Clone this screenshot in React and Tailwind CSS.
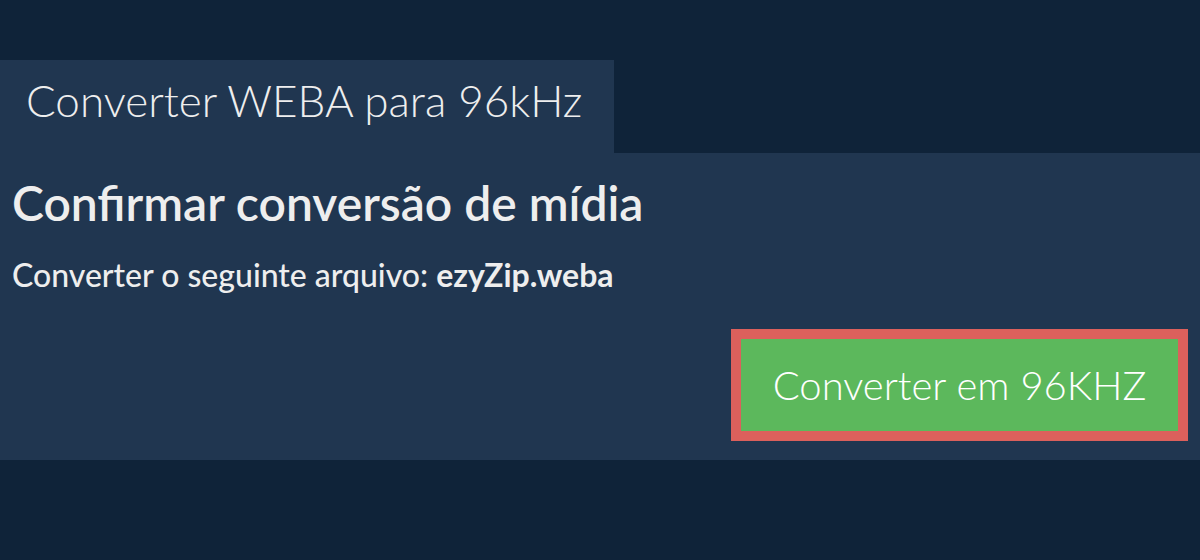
export default function App() {
  return (
    <div className="min-h-[560px] w-[1200px] bg-[#0f2339] pt-[60px] text-[#eeeeee] font-['Lato','Noto_Sans',sans-serif]">
      {/* aba do título */}
      <div className="h-[93px] w-[614px] bg-[#203650] pl-[26px] pt-[18px]">
        <h1 className="text-[44px] font-light leading-none">
          Converter WEBA para 96kHz
        </h1>
      </div>

      {/* painel de confirmação */}
      <div className="flex h-[307px] flex-col bg-[#203650] px-[12px]">
        <h2 className="mt-[26px] text-[48px] font-semibold leading-none">
          Confirmar conversão de mídia
        </h2>
        <p className="mt-[32px] text-[32px] font-medium leading-none">
          Converter o seguinte arquivo: <b className="font-bold">ezyZip.weba</b>
        </p>
        <div className="mt-[38px] flex justify-end">
          <button className="h-[112px] w-[457px] border-[10px] border-[#dc605c] bg-[#5cb85c] text-[40px] font-light text-white">
            Converter em 96KHZ
          </button>
        </div>
      </div>
    </div>
  );
}
